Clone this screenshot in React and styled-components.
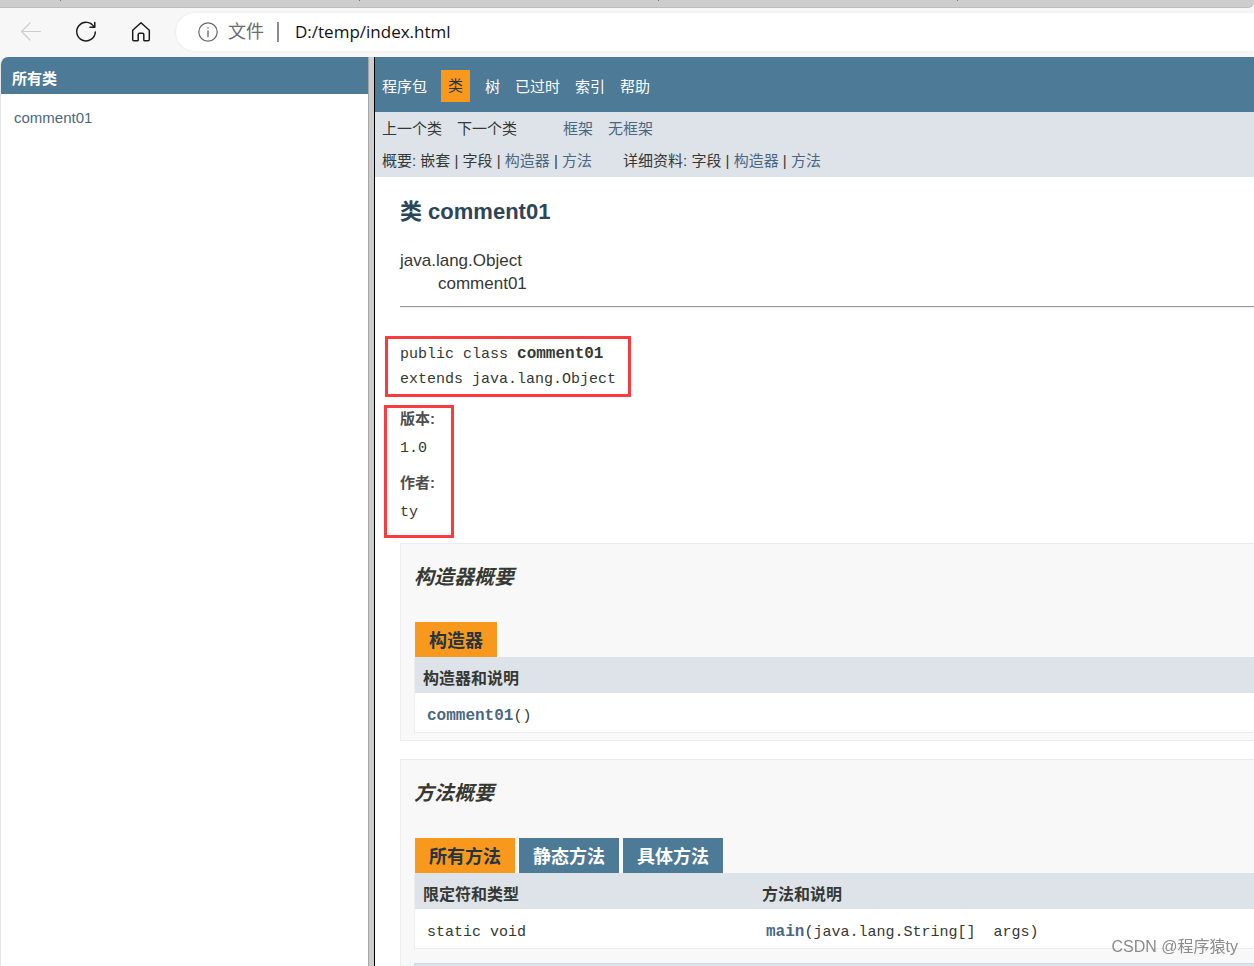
import React from 'react'
import styled, { createGlobalStyle } from 'styled-components'

const GlobalStyle = createGlobalStyle`
    * {
        box-sizing: border-box;
    }

    body {
        margin: 0;
        background-color: #ffffff;
        color: #353833;
        font-family: "Liberation Sans", "Noto Sans CJK SC", sans-serif;
        font-size: 15px;
    }

    a {
        color: #4A6782;
        text-decoration: none;
    }
`;

const Browser = styled.div`
    height: 100vh;
    display: flex;
    flex-direction: column;
    overflow: hidden;
    background-color: #f7f7f7;
`;

const TabStrip = styled.div`
    flex: none;
    height: 8px;
    display: flex;
    gap: 298px;
    padding-left: 60px;
    overflow: hidden;
    background-color: #cdcdcd;
    border-bottom: 1px solid #bcbcbc;
    border-bottom-right-radius: 6px;
`;

const TabMark = styled.span`
    flex: none;
    width: 1px;
    height: 1px;
    background-color: #777777;
`;

const Toolbar = styled.div`
    flex: none;
    height: 49px;
    display: flex;
    align-items: center;
    padding: 0 0 2px 19px;
`;

const ToolButton = styled.button`
    width: 24px;
    height: 24px;
    margin-right: 31px;
    padding: 0;
    border: none;
    background: none;
    color: ${props => props.disabled ? "#cccccc" : "#1b1b1b"};

    svg {
        display: block;
    }
`;

const AddressBar = styled.div`
    flex: 1;
    height: 38px;
    margin-left: -8px;
    padding-left: 22px;
    display: flex;
    align-items: center;
    border-radius: 19px 0 0 19px;
    background-color: #ffffff;
    box-shadow: 0 0 3px #e4e4e4;
    color: #6b6b6b;
`;

const Scheme = styled.label`
    margin-left: 10px;
    padding-right: 13px;
    font-size: 18px;
    line-height: 20px;
    border-right: 2px solid #8a8a8a;
`;

const Address = styled.input`
    flex: 1;
    padding: 0 0 0 16px;
    border: none;
    outline: none;
    background: none;
    color: #111111;
    font-family: "Open Sans", sans-serif;
    font-size: 17px;
`;

const Frames = styled.div`
    flex: 1;
    min-height: 0;
    display: flex;
`;

const Sidebar = styled.aside`
    flex: 0 0 368px;
    border-left: 1px solid #e6e6e6;
    border-top-left-radius: 8px;
    overflow: hidden;
    background-color: #ffffff;
`;

const SidebarTitle = styled.h1`
    margin: 0;
    padding: 7px 11px 0;
    font-size: 15px;
    line-height: 30px;
    background-color: #4D7A97;
    color: #ffffff;
`;

const ClassList = styled.ul`
    margin: 0;
    padding: 13px;
    list-style: none;
    line-height: 22px;
`;

const Splitter = styled.div`
    flex: 0 0 7px;
    background-color: #cdcdcd;
    border-left: 1px solid #a6a6a6;
    border-right: 1px solid #000000;
`;

const Main = styled.main`
    flex: 1;
    min-width: 0;
    overflow: hidden;
    background-color: #ffffff;
`;

const TopNav = styled.nav`
    height: 55px;
    padding: 2px 7px 0;
    display: flex;
    align-items: center;
    gap: 15px;
    background-color: #4D7A97;
`;

const NavLink = styled.a`
    color: #ffffff;
`;

const ActiveNav = styled.span`
    margin-left: -1px;
    padding: 0 7px;
    line-height: 32px;
    background-color: #F8981D;
    color: #253441;
`;

const SubNav = styled.div`
    padding: 1px 7px 0;
    background-color: #dee3e9;
`;

const SubRow = styled.div`
    display: flex;
    gap: ${props => props.$gap};
    line-height: 32px;
    white-space: nowrap;
`;

const LinkGroup = styled.div`
    display: flex;
    gap: 15px;
`;

const Content = styled.div`
    padding: 22px 0 0 25px;
`;

const Title = styled.h2`
    margin: 0;
    font-size: 22px;
    line-height: 26px;
    color: #2c4557;
`;

const Inheritance = styled.ul`
    margin: ${props => props.$nested ? "0" : "24px 0 11px"};
    padding-left: ${props => props.$nested ? "38px" : "0"};
    list-style: none;
    font-size: 17px;
    line-height: 23px;
`;

const Rule = styled.hr`
    margin: 0 0 28px;
    border: none;
    border-top: 1px solid #999999;
    border-bottom: 1px solid #ededed;
`;

const Marked = styled.div`
    width: fit-content;
    margin: ${props => props.$margin};
    padding: ${props => props.$pad};
    border: 3px solid #fa3a3c;
`;

const Signature = styled.pre`
    margin: 0;
    font-family: "Liberation Mono", monospace;
    font-size: 15px;
    line-height: 25px;

    strong {
        font-size: 16px;
        line-height: 20px;
    }
`;

const Details = styled.dl`
    margin: 0;

    dt {
        font-weight: bold;
        line-height: 22px;
        color: #4E4E4E;
    }

    dd {
        margin: 0;
        padding: 2px 0 6px;
        font-family: "Liberation Mono", monospace;
        line-height: 34px;
    }

    dd:last-child {
        padding-bottom: 0;
    }
`;

const Section = styled.section`
    margin-bottom: 18px;
    padding: 20px 0 7px 13px;
    border: 1px solid #ededed;
    border-right: none;
    background-color: #f8f8f8;
`;

const SectionTitle = styled.h3`
    margin: 0 0 32px;
    font-size: 20px;
    font-style: italic;
    line-height: 26px;
`;

const Tabs = styled.div`
    display: flex;
    gap: 4px;
    padding-left: 1px;
`;

const Tab = styled.button`
    height: 35px;
    padding: 0 14px 2px;
    border: none;
    font-family: inherit;
    font-size: 18px;
    font-weight: bold;
    background-color: ${props => props.$active ? "#F8981D" : "#4D7A97"};
    color: ${props => props.$active ? "#253441" : "#ffffff"};
`;

const Table = styled.table`
    width: 100%;
    border-spacing: 0;
    border-left: 1px solid #eeeeee;
    border-bottom: 1px solid #eeeeee;
    line-height: 22px;
    text-align: left;

    th {
        padding: 11px 8px 3px;
        font-size: 16px;
        background-color: #dee3e9;
    }

    td {
        padding: 12px 12px 4px;
        background-color: #ffffff;
        font-family: "Liberation Mono", monospace;
        white-space: pre;
    }

    td a {
        font-size: 16px;
        font-weight: bold;
    }
`;

const TypeHeader = styled.th`
    width: 339px;
`;

const Inherited = styled.div`
    height: 48px;
    margin-top: 14px;
    border: 1px solid #d0d9e0;
    border-right: none;
    background-color: #dee3e9;
`;

const Watermark = styled.div`
    position: fixed;
    right: 16px;
    bottom: 8px;
    font-size: 16px;
    line-height: 22px;
    color: #8b8b8b;
`;

const Icon = ({ children, size = 24 }) => (
    <svg width={size} height={size} viewBox={`0 0 ${size} ${size}`} fill="none" stroke="currentColor" strokeWidth="1.5" strokeLinecap="round" strokeLinejoin="round">
        {children}
    </svg>
)

const App = () => {
    return (
        <Browser>
            <GlobalStyle />
            <TabStrip>
                <TabMark />
                <TabMark />
                <TabMark />
                <TabMark />
            </TabStrip>
            <Toolbar>
                <ToolButton disabled aria-label="Back">
                    <Icon><path d="M21.5 11.5H2.5M11 3L2.5 11.5L11 20" strokeWidth="1.2" /></Icon>
                </ToolButton>
                <ToolButton aria-label="Refresh">
                    <Icon><path d="M20.2 7.2A9.3 9.3 0 1 0 21.3 12M20.8 2.5V7.3H16" /></Icon>
                </ToolButton>
                <ToolButton aria-label="Home">
                    <Icon><path d="M3.7 10.3L12 2.8L20.3 10.3V19.5Q20.3 20.8 19 20.8H15.6Q14.8 20.8 14.8 20V14.5Q14.8 13.2 13.5 13.2H10.5Q9.2 13.2 9.2 14.5V20Q9.2 20.8 8.4 20.8H5Q3.7 20.8 3.7 19.5Z" /></Icon>
                </ToolButton>
                <AddressBar>
                    <Icon size={20}>
                        <circle cx="10" cy="10" r="9.2" strokeWidth="1.2" />
                        <path d="M10 9V14.5M10 5.8V6" strokeWidth="1.4" />
                    </Icon>
                    <Scheme htmlFor="address">文件</Scheme>
                    <Address id="address" defaultValue="D:/temp/index.html" />
                </AddressBar>
            </Toolbar>
            <Frames>
                <Sidebar>
                    <SidebarTitle>所有类</SidebarTitle>
                    <ClassList>
                        <li><a href="#comment01">comment01</a></li>
                    </ClassList>
                </Sidebar>
                <Splitter />
                <Main>
                    <TopNav>
                        <NavLink href="#package">程序包</NavLink>
                        <ActiveNav>类</ActiveNav>
                        <NavLink href="#tree">树</NavLink>
                        <NavLink href="#deprecated">已过时</NavLink>
                        <NavLink href="#index">索引</NavLink>
                        <NavLink href="#help">帮助</NavLink>
                    </TopNav>
                    <SubNav>
                        <SubRow $gap="46px">
                            <LinkGroup>
                                <span>上一个类</span>
                                <span>下一个类</span>
                            </LinkGroup>
                            <LinkGroup>
                                <a href="#frames">框架</a>
                                <a href="#noframes">无框架</a>
                            </LinkGroup>
                        </SubRow>
                        <SubRow $gap="31px">
                            <div>概要: 嵌套 | 字段 | <a href="#constructors">构造器</a> | <a href="#methods">方法</a></div>
                            <div>详细资料: 字段 | <a href="#constructor-detail">构造器</a> | <a href="#method-detail">方法</a></div>
                        </SubRow>
                    </SubNav>
                    <Content>
                        <Title>类 comment01</Title>
                        <Inheritance>
                            <li>java.lang.Object</li>
                            <li>
                                <Inheritance $nested>
                                    <li>comment01</li>
                                </Inheritance>
                            </li>
                        </Inheritance>
                        <Rule />
                        <Marked $margin="0 0 8px -15px" $pad="3px 12px 2px">
                            <Signature>public class <strong>comment01</strong>{"\n"}extends java.lang.Object</Signature>
                        </Marked>
                        <Marked $margin="0 0 5px -16px" $pad="0 16px 5px 13px">
                            <Details>
                                <dt>版本:</dt>
                                <dd>1.0</dd>
                                <dt>作者:</dt>
                                <dd>ty</dd>
                            </Details>
                        </Marked>
                        <Section id="constructors">
                            <SectionTitle>构造器概要</SectionTitle>
                            <Tabs>
                                <Tab $active>构造器</Tab>
                            </Tabs>
                            <Table>
                                <thead>
                                    <tr><th>构造器和说明</th></tr>
                                </thead>
                                <tbody>
                                    <tr><td><a href="#constructor-detail">comment01</a>()</td></tr>
                                </tbody>
                            </Table>
                        </Section>
                        <Section id="methods">
                            <SectionTitle>方法概要</SectionTitle>
                            <Tabs>
                                <Tab $active>所有方法</Tab>
                                <Tab>静态方法</Tab>
                                <Tab>具体方法</Tab>
                            </Tabs>
                            <Table>
                                <thead>
                                    <tr>
                                        <TypeHeader>限定符和类型</TypeHeader>
                                        <th>方法和说明</th>
                                    </tr>
                                </thead>
                                <tbody>
                                    <tr>
                                        <td>static void</td>
                                        <td><a href="#method-detail">main</a>(java.lang.String[]  args)</td>
                                    </tr>
                                </tbody>
                            </Table>
                            <Inherited />
                        </Section>
                    </Content>
                </Main>
            </Frames>
            <Watermark>CSDN @程序猿ty</Watermark>
        </Browser>
    )
}

export default App
